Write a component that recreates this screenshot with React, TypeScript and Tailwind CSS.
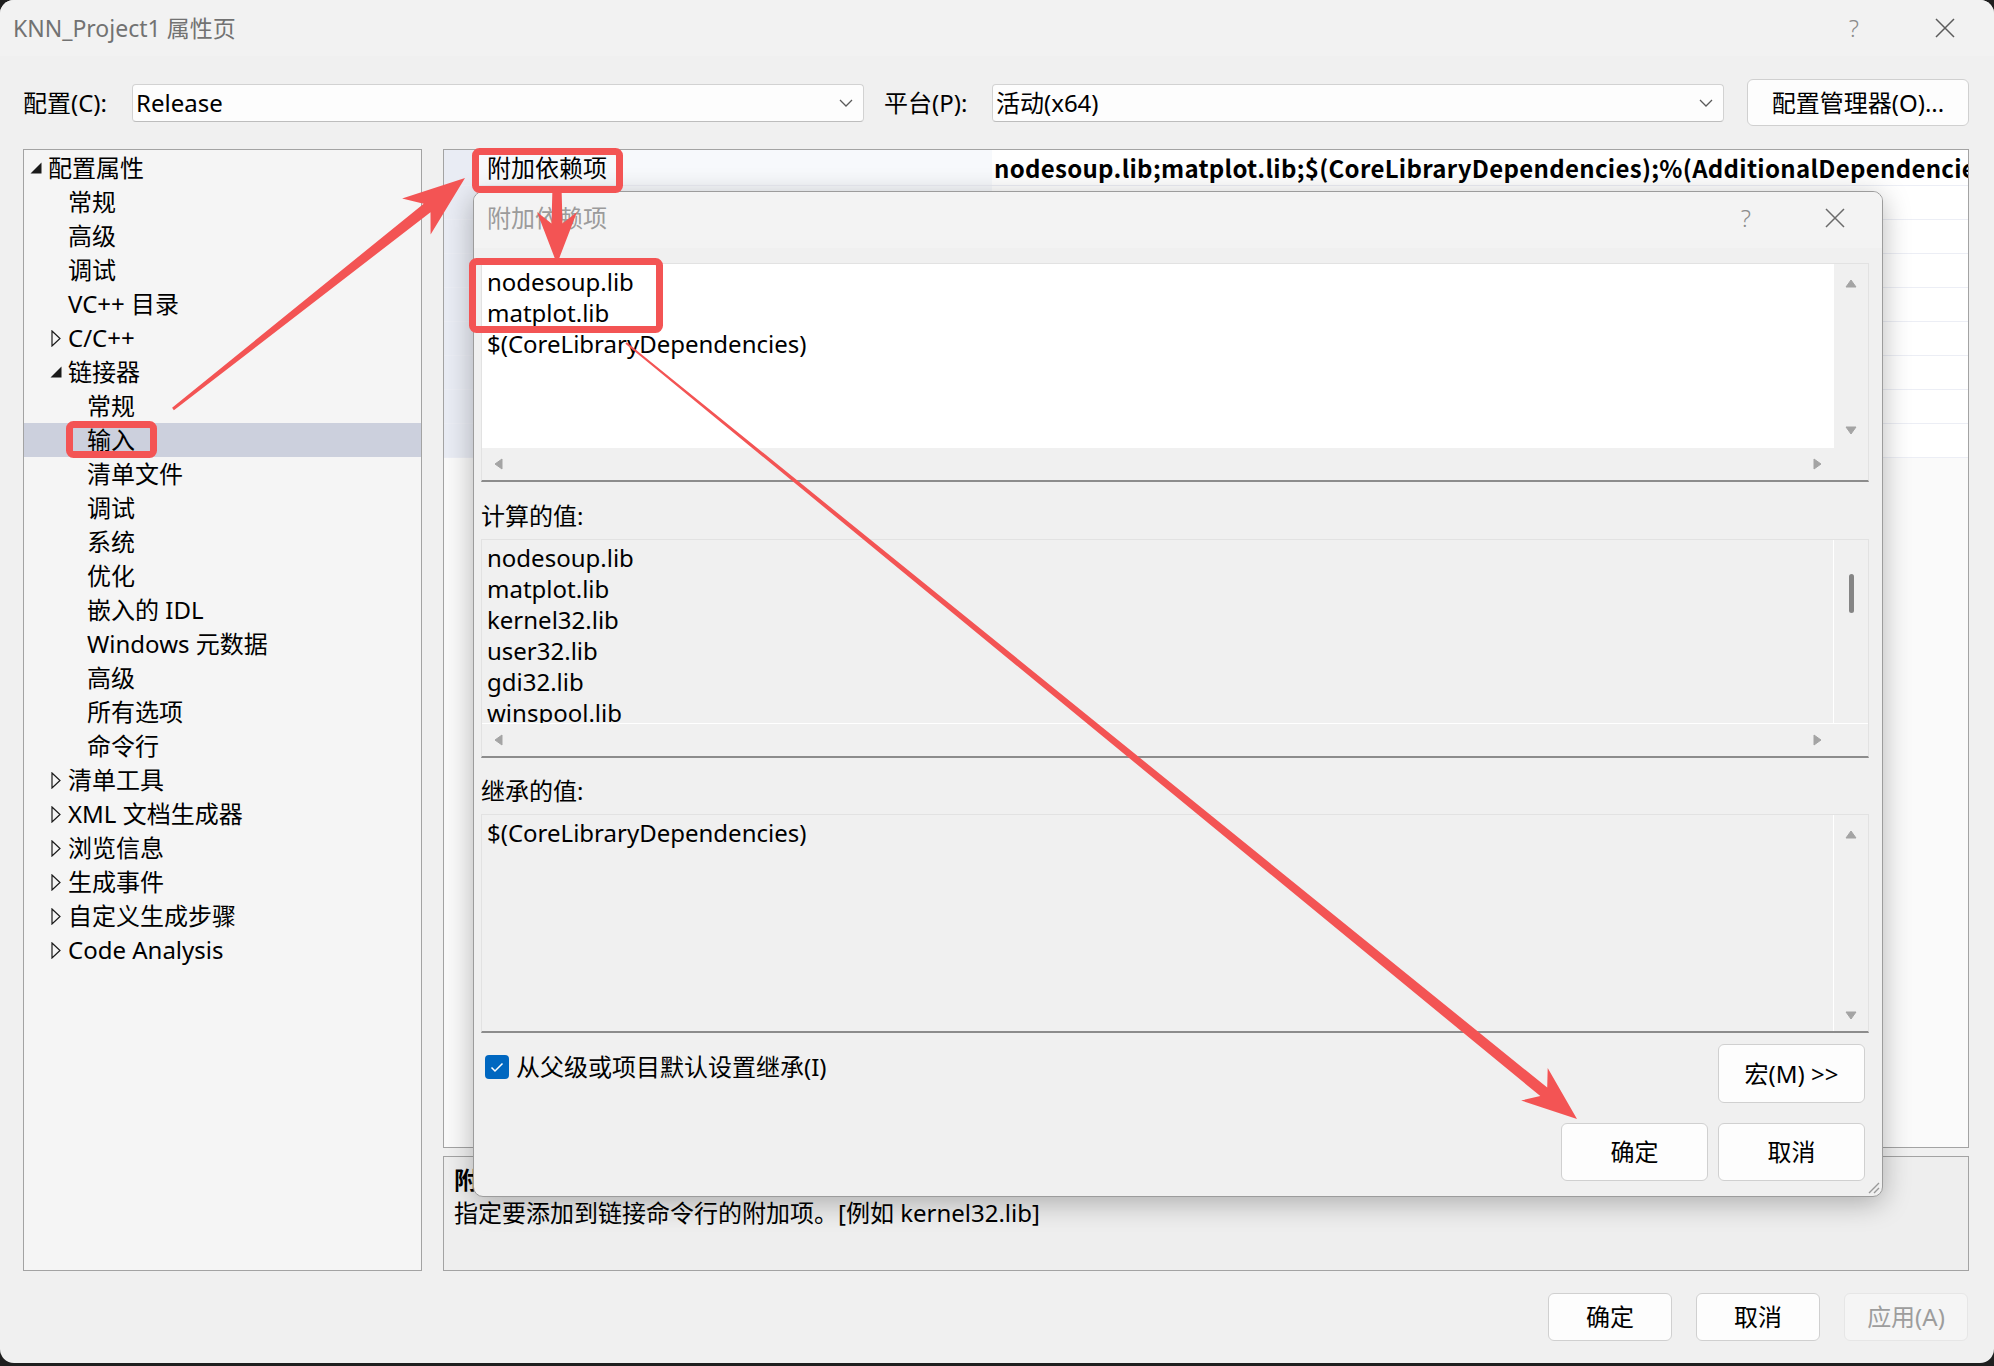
import React from "react";

type P = [number, number];

function arrowPts(s: P, t: P, w0: number, w1: number, L: number, H: number): string {
  const dx = t[0] - s[0];
  const dy = t[1] - s[1];
  const len = Math.hypot(dx, dy);
  const ux = dx / len;
  const uy = dy / len;
  const nx = -uy;
  const ny = ux;
  const bx = t[0] - ux * L;
  const by = t[1] - uy * L;
  const jx = t[0] - ux * L * 0.78;
  const jy = t[1] - uy * L * 0.78;
  const pts: P[] = [
    [s[0] + (nx * w0) / 2, s[1] + (ny * w0) / 2],
    [jx + (nx * w1) / 2, jy + (ny * w1) / 2],
    [bx + nx * H, by + ny * H],
    [t[0], t[1]],
    [bx - nx * H, by - ny * H],
    [jx - (nx * w1) / 2, jy - (ny * w1) / 2],
    [s[0] - (nx * w0) / 2, s[1] - (ny * w0) / 2],
  ];
  return pts.map((p) => `${p[0].toFixed(1)},${p[1].toFixed(1)}`).join(" ");
}

const Tri = ({ dir }: { dir: "up" | "down" | "left" | "right" }) => {
  const d =
    dir === "up"
      ? "M1 9 L6 2 L11 9 Z"
      : dir === "down"
      ? "M1 3 L6 10 L11 3 Z"
      : dir === "left"
      ? "M9 1 L2 6 L9 11 Z"
      : "M3 1 L10 6 L3 11 Z";
  return (
    <svg width="12" height="12" viewBox="0 0 12 12">
      <path d={d} fill="#a4a4a4" stroke="#a4a4a4" strokeWidth="1" strokeLinejoin="round" />
    </svg>
  );
};

const Chevron = () => (
  <svg width="14" height="8" viewBox="0 0 14 8">
    <path d="M1 1 L7 7 L13 1" fill="none" stroke="#5a5a5a" strokeWidth="1.3" />
  </svg>
);

const CloseX = ({ color }: { color: string }) => (
  <svg width="20" height="20" viewBox="0 0 20 20">
    <path d="M1 1 L19 19 M19 1 L1 19" stroke={color} strokeWidth="1.5" />
  </svg>
);

type TreeItem = { t: string; lvl: number; tri?: "open" | "closed"; sel?: boolean };

const tree: TreeItem[] = [
  { t: "配置属性", lvl: 0, tri: "open" },
  { t: "常规", lvl: 1 },
  { t: "高级", lvl: 1 },
  { t: "调试", lvl: 1 },
  { t: "VC++ 目录", lvl: 1 },
  { t: "C/C++", lvl: 1, tri: "closed" },
  { t: "链接器", lvl: 1, tri: "open" },
  { t: "常规", lvl: 2 },
  { t: "输入", lvl: 2, sel: true },
  { t: "清单文件", lvl: 2 },
  { t: "调试", lvl: 2 },
  { t: "系统", lvl: 2 },
  { t: "优化", lvl: 2 },
  { t: "嵌入的 IDL", lvl: 2 },
  { t: "Windows 元数据", lvl: 2 },
  { t: "高级", lvl: 2 },
  { t: "所有选项", lvl: 2 },
  { t: "命令行", lvl: 2 },
  { t: "清单工具", lvl: 1, tri: "closed" },
  { t: "XML 文档生成器", lvl: 1, tri: "closed" },
  { t: "浏览信息", lvl: 1, tri: "closed" },
  { t: "生成事件", lvl: 1, tri: "closed" },
  { t: "自定义生成步骤", lvl: 1, tri: "closed" },
  { t: "Code Analysis", lvl: 1, tri: "closed" },
];

const gridRows = [
  "附加依赖项",
  "忽略所有默认库",
  "忽略特定默认库",
  "模块定义文件",
  "将模块添加到程序集",
  "嵌入托管资源文件",
  "强制符号引用",
  "延迟加载的 DLL",
  "程序集链接资源",
];

const TreeRow = ({ it }: { it: TreeItem }) => {
  const pl = it.lvl === 0 ? "pl-0" : it.lvl === 1 ? "pl-[20px]" : "pl-[39px]";
  return (
    <div className={`flex items-center h-[34px] ${pl} ${it.sel ? "bg-[#ccd0dd]" : ""}`}>
      <div className="w-[24px] h-[34px] flex items-center justify-center">
        {it.tri === "open" && (
          <svg width="12" height="12" viewBox="0 0 12 12">
            <path d="M11.5 0.5 L11.5 11.5 L0.5 11.5 Z" fill="#1a1a1a" />
          </svg>
        )}
        {it.tri === "closed" && (
          <svg width="10" height="17" viewBox="0 0 10 17">
            <path d="M1 1 L9 8.5 L1 16 Z" fill="none" stroke="#1a1a1a" strokeWidth="1.2" />
          </svg>
        )}
      </div>
      <span className="leading-[34px] whitespace-nowrap">{it.t}</span>
    </div>
  );
};

const Btn = ({ label, w, h, disabled }: { label: string; w: string; h: string; disabled?: boolean }) => (
  <div
    className={`${w} ${h} flex items-center justify-center rounded-[6px] border ${
      disabled ? "bg-[#f5f5f5] border-[#e6e6e6] text-[#9d9d9d]" : "bg-[#fdfdfd] border-[#d0d0d0] text-black"
    }`}
  >
    {label}
  </div>
);

export default function App() {
  const red = "#f35454";
  return (
    <div className="relative w-[1994px] h-[1366px] bg-[#1f1f1f] overflow-hidden font-['Noto_Sans','Noto_Sans_CJK_SC',sans-serif] text-[24px] text-black">
      {/* main window */}
      <div className="relative w-[1994px] h-[1363px] rounded-[14px] bg-[#f0f0f0] flex flex-col overflow-hidden">
        {/* title bar */}
        <div className="h-[56px] flex items-center justify-between pl-[13px] pr-[39px] bg-[#f2f2f2]">
          <span className="text-[23px] text-[#727272]">KNN_Project1 属性页</span>
          <div className="flex items-center gap-[76px]">
            <span className="text-[24px] text-[#8a8a8a] font-light">?</span>
            <CloseX color="#5c5c5c" />
          </div>
        </div>

        {/* config row */}
        <div className="mt-[23px] h-[47px] flex items-center pl-[23px]">
          <span className="w-[109px] whitespace-nowrap">配置(C):</span>
          <div className="w-[732px] h-[38px] bg-[#fdfdfd] border border-[#d2d2d2] border-b-[#bdbdbd] rounded-[4px] flex items-center justify-between pl-[3px] pr-[10px]">
            <span>Release</span>
            <Chevron />
          </div>
          <span className="ml-[20px] w-[108px] whitespace-nowrap">平台(P):</span>
          <div className="w-[732px] h-[38px] bg-[#fdfdfd] border border-[#d2d2d2] border-b-[#bdbdbd] rounded-[4px] flex items-center justify-between pl-[3px] pr-[10px]">
            <span>活动(x64)</span>
            <Chevron />
          </div>
          <div className="ml-[23px] w-[222px] h-[47px] bg-[#fdfdfd] border border-[#d0d0d0] rounded-[6px] flex items-center justify-center">
            配置管理器(O)...
          </div>
        </div>

        {/* main area */}
        <div className="mt-[23px] flex pl-[23px] gap-[21px]">
          <div className="w-[399px] h-[1122px] bg-[#f5f5f5] border border-[#a3a3a3] pt-[1px] overflow-hidden">
            {tree.map((it, i) => (
              <TreeRow key={i} it={it} />
            ))}
          </div>
          <div className="w-[1526px] flex flex-col gap-[8px]">
            <div className="h-[999px] bg-[#fafafa] border border-[#a3a3a3] overflow-hidden">
              {gridRows.map((n, i) => (
                <div key={i} className={`flex border-b border-[#eceef5] ${i === 0 ? "h-[36px]" : "h-[34px]"}`}>
                  <div className="w-[34px] bg-[#e9ecf4]" />
                  <div className="w-[514px] pl-[9px] flex items-center bg-[#f7f9fc] whitespace-nowrap">{n}</div>
                  <div className="flex-1 bg-white flex items-center pl-[2px] overflow-hidden whitespace-nowrap">
                    {i === 0 && (
                      <span className="font-['Noto_Sans_CJK_SC',sans-serif] font-bold tracking-[0.3px]">
                        nodesoup.lib;matplot.lib;$(CoreLibraryDependencies);%(AdditionalDependencies)
                      </span>
                    )}
                  </div>
                </div>
              ))}
            </div>
            <div className="h-[115px] bg-[#eeeeee] border border-[#a3a3a3] pl-[10px] pt-[5px] leading-[34px]">
              <div className="font-bold font-['Noto_Sans_CJK_SC',sans-serif]">附加依赖项</div>
              <div>指定要添加到链接命令行的附加项。[例如 kernel32.lib]</div>
            </div>
          </div>
        </div>

        {/* bottom buttons */}
        <div className="mt-[22px] flex justify-end gap-[24px] pr-[26px]">
          <Btn label="确定" w="w-[124px]" h="h-[48px]" />
          <Btn label="取消" w="w-[124px]" h="h-[48px]" />
          <Btn label="应用(A)" w="w-[124px]" h="h-[48px]" disabled />
        </div>
      </div>

      {/* dialog */}
      <div className="absolute left-[473px] top-[191px] w-[1410px] h-[1006px] bg-[#f0f0f0] border border-[#9c9c9c] rounded-[10px] shadow-[0_6px_28px_rgba(0,0,0,0.28)] flex flex-col overflow-hidden">
        <div className="h-[56px] bg-[#f3f3f3] flex items-center justify-between pl-[13px] pr-[37px] pb-[4px] shrink-0">
          <span className="text-[#9b9b9b]">附加依赖项</span>
          <div className="flex items-center gap-[74px]">
            <span className="text-[#8c8c8c] font-light">?</span>
            <CloseX color="#6a6a6a" />
          </div>
        </div>

        <div className="pl-[7px] pr-[13px] flex flex-col">
          {/* edit box */}
          <div className="mt-[15px] h-[219px] border-t border-x border-[#e2e2e2] border-b-2 border-b-[#8c8c8c] flex flex-col">
            <div className="flex h-[184px]">
              <div className="flex-1 bg-white pl-[5px] pt-[2px] leading-[31px]">
                <div>nodesoup.lib</div>
                <div>matplot.lib</div>
                <div>$(CoreLibraryDependencies)</div>
              </div>
              <div className="w-[34px] flex flex-col items-center justify-between pt-[14px] pb-[12px]">
                <Tri dir="up" />
                <Tri dir="down" />
              </div>
            </div>
            <div className="flex-1 flex">
              <div className="flex-1 flex items-center justify-between px-[11px]">
                <Tri dir="left" />
                <Tri dir="right" />
              </div>
              <div className="w-[34px]" />
            </div>
          </div>

          <div className="h-[57px] pt-[18px] leading-[31px]">计算的值:</div>

          {/* computed box */}
          <div className="h-[219px] border-t border-x border-[#e2e2e2] border-b-2 border-b-[#8c8c8c] flex flex-col">
            <div className="flex h-[184px] border-b border-white">
              <div className="flex-1 pl-[5px] pt-[2px] leading-[31px] overflow-hidden border-r border-white">
                <div>nodesoup.lib</div>
                <div>matplot.lib</div>
                <div>kernel32.lib</div>
                <div>user32.lib</div>
                <div>gdi32.lib</div>
                <div>winspool.lib</div>
              </div>
              <div className="w-[34px] flex justify-center pt-[34px]">
                <div className="w-[5px] h-[39px] rounded-full bg-[#858585]" />
              </div>
            </div>
            <div className="flex-1 flex">
              <div className="flex-1 flex items-center justify-between px-[11px]">
                <Tri dir="left" />
                <Tri dir="right" />
              </div>
              <div className="w-[34px]" />
            </div>
          </div>

          <div className="h-[56px] pt-[17px] leading-[31px]">继承的值:</div>

          {/* inherited box */}
          <div className="h-[219px] border-t border-x border-[#e2e2e2] border-b-2 border-b-[#8c8c8c] flex">
            <div className="flex-1 pl-[5px] pt-[2px] leading-[31px] border-r border-white">
              <div>$(CoreLibraryDependencies)</div>
            </div>
            <div className="w-[34px] flex flex-col items-center justify-between pt-[14px] pb-[10px]">
              <Tri dir="up" />
              <Tri dir="down" />
            </div>
          </div>

          {/* checkbox + macro */}
          <div className="mt-[11px] flex justify-between items-start pr-[4px]">
            <div className="flex items-center mt-[10px] ml-[4px] gap-[7px]">
              <div className="w-[24px] h-[24px] rounded-[4px] bg-[#0067c0] flex items-center justify-center">
                <svg width="14" height="11" viewBox="0 0 14 11">
                  <path d="M1.5 5.5 L5 9 L12.5 1.5" fill="none" stroke="white" strokeWidth="1.5" />
                </svg>
              </div>
              <span className="leading-[26px]">从父级或项目默认设置继承(I)</span>
            </div>
            <Btn label="宏(M) >>" w="w-[147px]" h="h-[59px]" />
          </div>

          <div className="mt-[20px] flex justify-end gap-[10px] pr-[4px]">
            <Btn label="确定" w="w-[147px]" h="h-[58px]" />
            <Btn label="取消" w="w-[147px]" h="h-[58px]" />
          </div>
        </div>

        {/* resize grip */}
        <svg className="absolute right-[2px] bottom-[2px]" width="14" height="14" viewBox="0 0 14 14">
          <path d="M13 3 L3 13 M13 8 L8 13" stroke="#9a9a9a" strokeWidth="1.4" />
        </svg>
      </div>

      {/* annotations */}
      <svg className="absolute left-0 top-0 pointer-events-none" width="1994" height="1366" viewBox="0 0 1994 1366">
        <rect x="475.5" y="151.5" width="144" height="38" rx="4" fill="none" stroke={red} strokeWidth="7" />
        <rect x="69.5" y="424.5" width="84" height="30" rx="4" fill="none" stroke={red} strokeWidth="7" />
        <rect x="472.5" y="261.5" width="187" height="68" rx="4" fill="none" stroke={red} strokeWidth="7" />
        <polygon points={arrowPts([173, 409], [465, 178], 3, 11, 62, 23)} fill={red} />
        <polygon points={arrowPts([557, 186], [557, 264], 9, 11, 52, 20)} fill={red} />
        <polygon points={arrowPts([626, 343], [1577, 1119], 2, 11, 55, 21)} fill={red} />
      </svg>
    </div>
  );
}
